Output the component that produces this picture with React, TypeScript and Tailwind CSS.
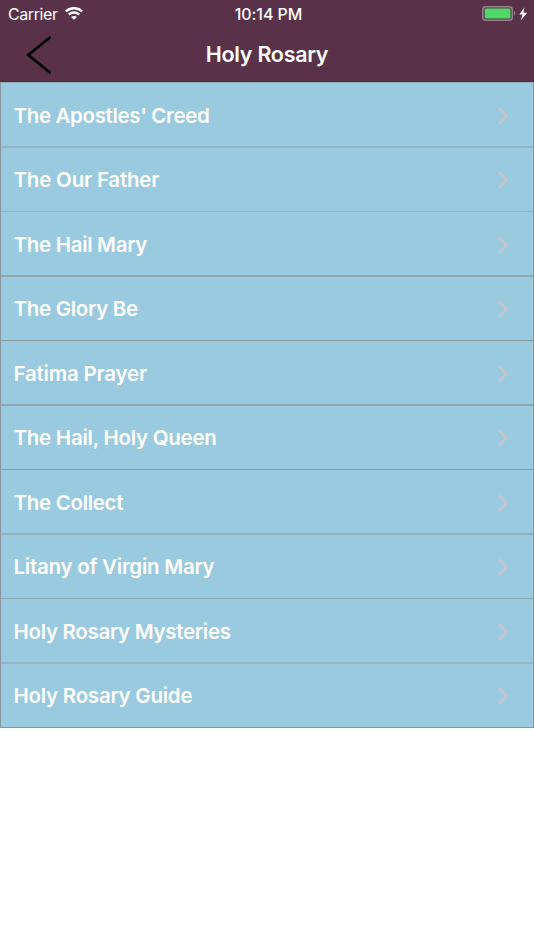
import { clsx } from "clsx";

type Prayer = {
  title: string;
  line: string;
  tracking?: string;
};

const prayers: Prayer[] = [
  { title: "The Apostles' Creed", line: "h-[65px] pt-0.5 border-b-2 border-[#93b5c3]", tracking: "tracking-[-0.34px]" },
  { title: "The Our Father", line: "h-16 pt-px border-b border-[#8fb3c2]", tracking: "tracking-[-0.2px]" },
  { title: "The Hail Mary", line: "h-[65px] pt-0.5 border-b-2 border-[#8da6b0]" },
  { title: "The Glory Be", line: "h-16 pt-px border-b border-[#83979e]" },
  { title: "Fatima Prayer", line: "h-[65px] pt-0.5 border-b-2 border-[#8ea8b3]", tracking: "tracking-[-0.2px]" },
  { title: "The Hail, Holy Queen", line: "h-16 pt-px border-b border-[#869ca7]", tracking: "tracking-[-0.25px]" },
  { title: "The Collect", line: "h-[65px] pt-0.5 border-b-2 border-[#91afbc]" },
  { title: "Litany of Virgin Mary", line: "h-16 pt-px border-b border-[#8ba7b4]", tracking: "tracking-[-0.25px]" },
  { title: "Holy Rosary Mysteries", line: "h-[65px] pt-0.5 border-b-2 border-[#93b7c7]" },
  { title: "Holy Rosary Guide", line: "h-16 pt-px border-b border-[#87979d]", tracking: "tracking-[-0.25px]" },
];

function WifiIcon() {
  return (
    <svg width="18" height="14" viewBox="0 0 18 14" fill="none" aria-hidden="true">
      <path d="M.8 4.4C5.4.1 12.6.1 17.2 4.4" stroke="white" strokeWidth="2.5" />
      <path d="M3.7 7.6c3-2.8 7.6-2.8 10.6 0" stroke="white" strokeWidth="2.3" />
      <path d="M9 12.8 6 10c1.7-1.5 4.3-1.5 6 0L9 12.8z" fill="white" />
    </svg>
  );
}

function BatteryIcon() {
  return (
    <svg width="46" height="16" viewBox="0 0 46 16" fill="none" aria-hidden="true">
      <rect x="0.75" y="0.75" width="29.5" height="13.5" rx="3" stroke="#9a8191" strokeWidth="1.5" />
      <rect x="2.7" y="2.6" width="25.8" height="9.9" rx="1.3" fill="#4cd964" />
      <path d="M32 5.1c1.8.7 1.8 3.9 0 4.6V5.1z" fill="#9a8191" />
      <path d="M42.4 1.3 37.3 8.4h3.3L38.7 14.4 45.2 6.8h-3.7L42.4 1.3z" fill="white" />
    </svg>
  );
}

function StatusBar() {
  return (
    <div className="grid h-7 grid-cols-3 items-center pl-2 pr-1.5 text-[16px] leading-7">
      <div className="flex items-center gap-[7px]">
        <span className="tracking-[-0.4px]">Carrier</span>
        <WifiIcon />
      </div>
      <span className="pl-px text-center font-medium tracking-[-0.05px]">10:14 PM</span>
      <div className="flex justify-end">
        <BatteryIcon />
      </div>
    </div>
  );
}

function NavBar() {
  return (
    <div className="grid h-[53px] grid-cols-[1fr_auto_1fr] items-center">
      <button type="button" aria-label="Back" className="ml-[26px] w-[26px]">
        <svg width="26" height="38" viewBox="0 0 26 38" fill="none" aria-hidden="true" className="block">
          <path d="M24.5 1 2.3 19 24.5 37" stroke="black" strokeWidth="2.7" />
        </svg>
      </button>
      <h1 className="text-[21.5px] leading-[53px] font-semibold tracking-[-0.28px]">Holy Rosary</h1>
    </div>
  );
}

function PrayerRow({ title, line, tracking = "tracking-[-0.3px]" }: Prayer) {
  return (
    <li className={clsx("flex items-center justify-between pr-[24px] pl-[12.5px]", line)}>
      <span className={clsx("text-[20.5px] leading-7 font-semibold", tracking)}>{title}</span>
      <svg width="11" height="18" viewBox="0 0 11 18" fill="none" aria-hidden="true">
        <path d="M.7 1.2 8.5 9 .7 16.8" stroke="#c5c4c9" strokeWidth="2.5" />
      </svg>
    </li>
  );
}

export default function App() {
  return (
    <div className="min-h-screen bg-white font-['Inter',sans-serif] text-white">
      <header className="h-[82px] border-b border-[#4f2c43] bg-[#593249]">
        <StatusBar />
        <NavBar />
      </header>
      <ul className="border-x border-t border-x-[#87979d] border-t-[#91adb9] bg-[#99cae0]">
        {prayers.map((prayer) => (
          <PrayerRow key={prayer.title} {...prayer} />
        ))}
      </ul>
    </div>
  );
}
